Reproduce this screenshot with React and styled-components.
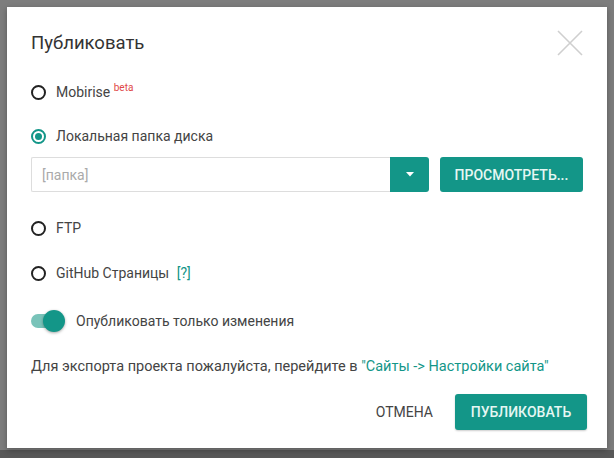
import { useState } from "react";
import styled, { createGlobalStyle } from "styled-components";

const GlobalStyle = createGlobalStyle`
html, body { margin: 0; padding: 0; }
body {
    font-family: Roboto, "Noto Sans", sans-serif;
    background: linear-gradient(#7d7d7d 0, #7d7d7d 450px, #585858 450px);
    width: 614px;
    height: 458px;
    overflow: hidden;
}
`;

const TEAL = "#139688";

function Publish(){
    const [target, setTarget] = useState('local');
    const [onlyChanges, setOnlyChanges] = useState(true);

    return(
        <Overlay>
            <Modal>
                <Header>
                    <Title>Публиковать</Title>
                    <CloseBtn aria-label="close">
                        <svg width="26" height="26" viewBox="0 0 26 26">
                            <path d="M1 1L25 25M25 1L1 25" stroke="#cfcfcf" strokeWidth="1.6" fill="none"/>
                        </svg>
                    </CloseBtn>
                </Header>

                <RadioRow top={25} onClick={()=>setTarget('mobirise')}>
                    <Radio checked={target==='mobirise'}/>
                    <Label>Mobirise <Beta>beta</Beta></Label>
                </RadioRow>

                <RadioRow top={20} onClick={()=>setTarget('local')}>
                    <Radio checked={target==='local'}/>
                    <Label>Локальная папка диска</Label>
                </RadioRow>

                <PathRow>
                    <PathInput placeholder="[папка]"/>
                    <CaretBtn>
                        <svg width="8" height="5" viewBox="0 0 8 5">
                            <path d="M0 0H8L4 4.5Z" fill="#fff"/>
                        </svg>
                    </CaretBtn>
                    <BrowseBtn>ПРОСМОТРЕТЬ...</BrowseBtn>
                </PathRow>

                <RadioRow top={24} onClick={()=>setTarget('ftp')}>
                    <Radio checked={target==='ftp'}/>
                    <Label>FTP</Label>
                </RadioRow>

                <RadioRow top={21} onClick={()=>setTarget('github')}>
                    <Radio checked={target==='github'}/>
                    <Label>GitHub Страницы <Help>[?]</Help></Label>
                </RadioRow>

                <ToggleRow onClick={()=>setOnlyChanges(!onlyChanges)}>
                    <Toggle on={onlyChanges}><Knob on={onlyChanges}/></Toggle>
                    <Label>Опубликовать только изменения</Label>
                </ToggleRow>

                <Note>
                    Для экспорта проекта пожалуйста, перейдите в <Link>"Сайты -&gt; Настройки сайта"</Link>
                </Note>

                <Footer>
                    <CancelBtn>ОТМЕНА</CancelBtn>
                    <PrimaryBtn>ПУБЛИКОВАТЬ</PrimaryBtn>
                </Footer>
            </Modal>
        </Overlay>
    )
}

export default function App(){
    return(
        <>
            <GlobalStyle/>
            <Publish/>
        </>
    )
}

const Overlay = styled.div`
width:614px;
height:458px;
padding:7px 0 0 7px;
box-sizing:border-box;
`;

const Modal = styled.div`
width:600px;
height:441px;
box-sizing:border-box;
background:#fff;
padding:24px 24px 0 24px;
display:flex;
flex-direction:column;
box-shadow:0 2px 6px rgba(0,0,0,0.3);
`;

const Header = styled.div`
display:flex;
justify-content:space-between;
align-items:center;
height:24px;
`;

const Title = styled.h1`
margin:0;
font-size:18.5px;
font-weight:400;
color:#333;
line-height:24px;
`;

const CloseBtn = styled.button`
border:none;
background:none;
padding:0;
display:flex;
cursor:pointer;
`;

const RadioRow = styled.label`
display:flex;
align-items:center;
height:24px;
margin-top:${props=>props.top}px;
cursor:pointer;
`;

const Radio = styled.span`
width:15px;
height:15px;
box-sizing:border-box;
border-radius:50%;
border:2px solid ${props=>props.checked ? TEAL : '#222'};
margin-right:10px;
display:flex;
align-items:center;
justify-content:center;
&::after{
    content:'';
    display:${props=>props.checked ? 'block' : 'none'};
    width:7px;
    height:7px;
    border-radius:50%;
    background:${TEAL};
}
`;

const Label = styled.span`
font-size:14px;
color:#444;
line-height:20px;
`;

const Beta = styled.sup`
color:#e04848;
font-size:10px;
vertical-align:6px;
line-height:0;
`;

const Help = styled.span`
color:${TEAL};
margin-left:4px;
`;

const PathRow = styled.div`
display:flex;
align-items:stretch;
height:35px;
margin-top:9px;
`;

const PathInput = styled.input`
flex:0 0 359px;
box-sizing:border-box;
border:1px solid #ddd;
border-right:none;
border-radius:2px 0 0 2px;
padding:0 10px;
font-family:inherit;
font-size:14px;
color:#444;
outline:none;
&::placeholder{ color:#aaa; }
`;

const CaretBtn = styled.button`
width:39px;
border:none;
background:${TEAL};
border-radius:0 3px 3px 0;
display:flex;
align-items:center;
justify-content:center;
padding:0;
`;

const BrowseBtn = styled.button`
margin-left:11px;
width:143px;
border:none;
border-radius:3px;
background:${TEAL};
color:#e6f7f3;
font-family:inherit;
font-size:14px;
font-weight:500;
padding:0;
`;

const ToggleRow = styled.label`
display:flex;
align-items:center;
height:24px;
margin-top:24px;
cursor:pointer;
`;

const Toggle = styled.span`
position:relative;
width:30px;
height:14px;
border-radius:7px;
background:${props=>props.on ? '#79c3b9' : '#ccc'};
margin-right:15px;
`;

const Knob = styled.span`
position:absolute;
top:-4px;
left:${props=>props.on ? '12px' : '-2px'};
width:22px;
height:22px;
border-radius:50%;
background:${props=>props.on ? TEAL : '#f5f5f5'};
box-shadow:0 1px 3px rgba(0,0,0,0.35);
`;

const Note = styled.p`
margin:22px 0 0 0;
font-size:14.5px;
line-height:24px;
color:#444;
`;

const Link = styled.a`
color:${TEAL};
`;

const Footer = styled.div`
display:flex;
justify-content:flex-end;
align-items:center;
gap:22px;
margin-top:15px;
margin-right:-4px;
`;

const CancelBtn = styled.button`
border:none;
background:none;
padding:0;
font-family:inherit;
font-size:14px;
color:#444;
`;

const PrimaryBtn = styled.button`
width:132px;
height:36px;
border:none;
border-radius:3px;
background:${TEAL};
color:#e6f7f3;
font-family:inherit;
font-size:14px;
font-weight:500;
box-shadow:0 1px 2px rgba(0,0,0,0.2);
`;
